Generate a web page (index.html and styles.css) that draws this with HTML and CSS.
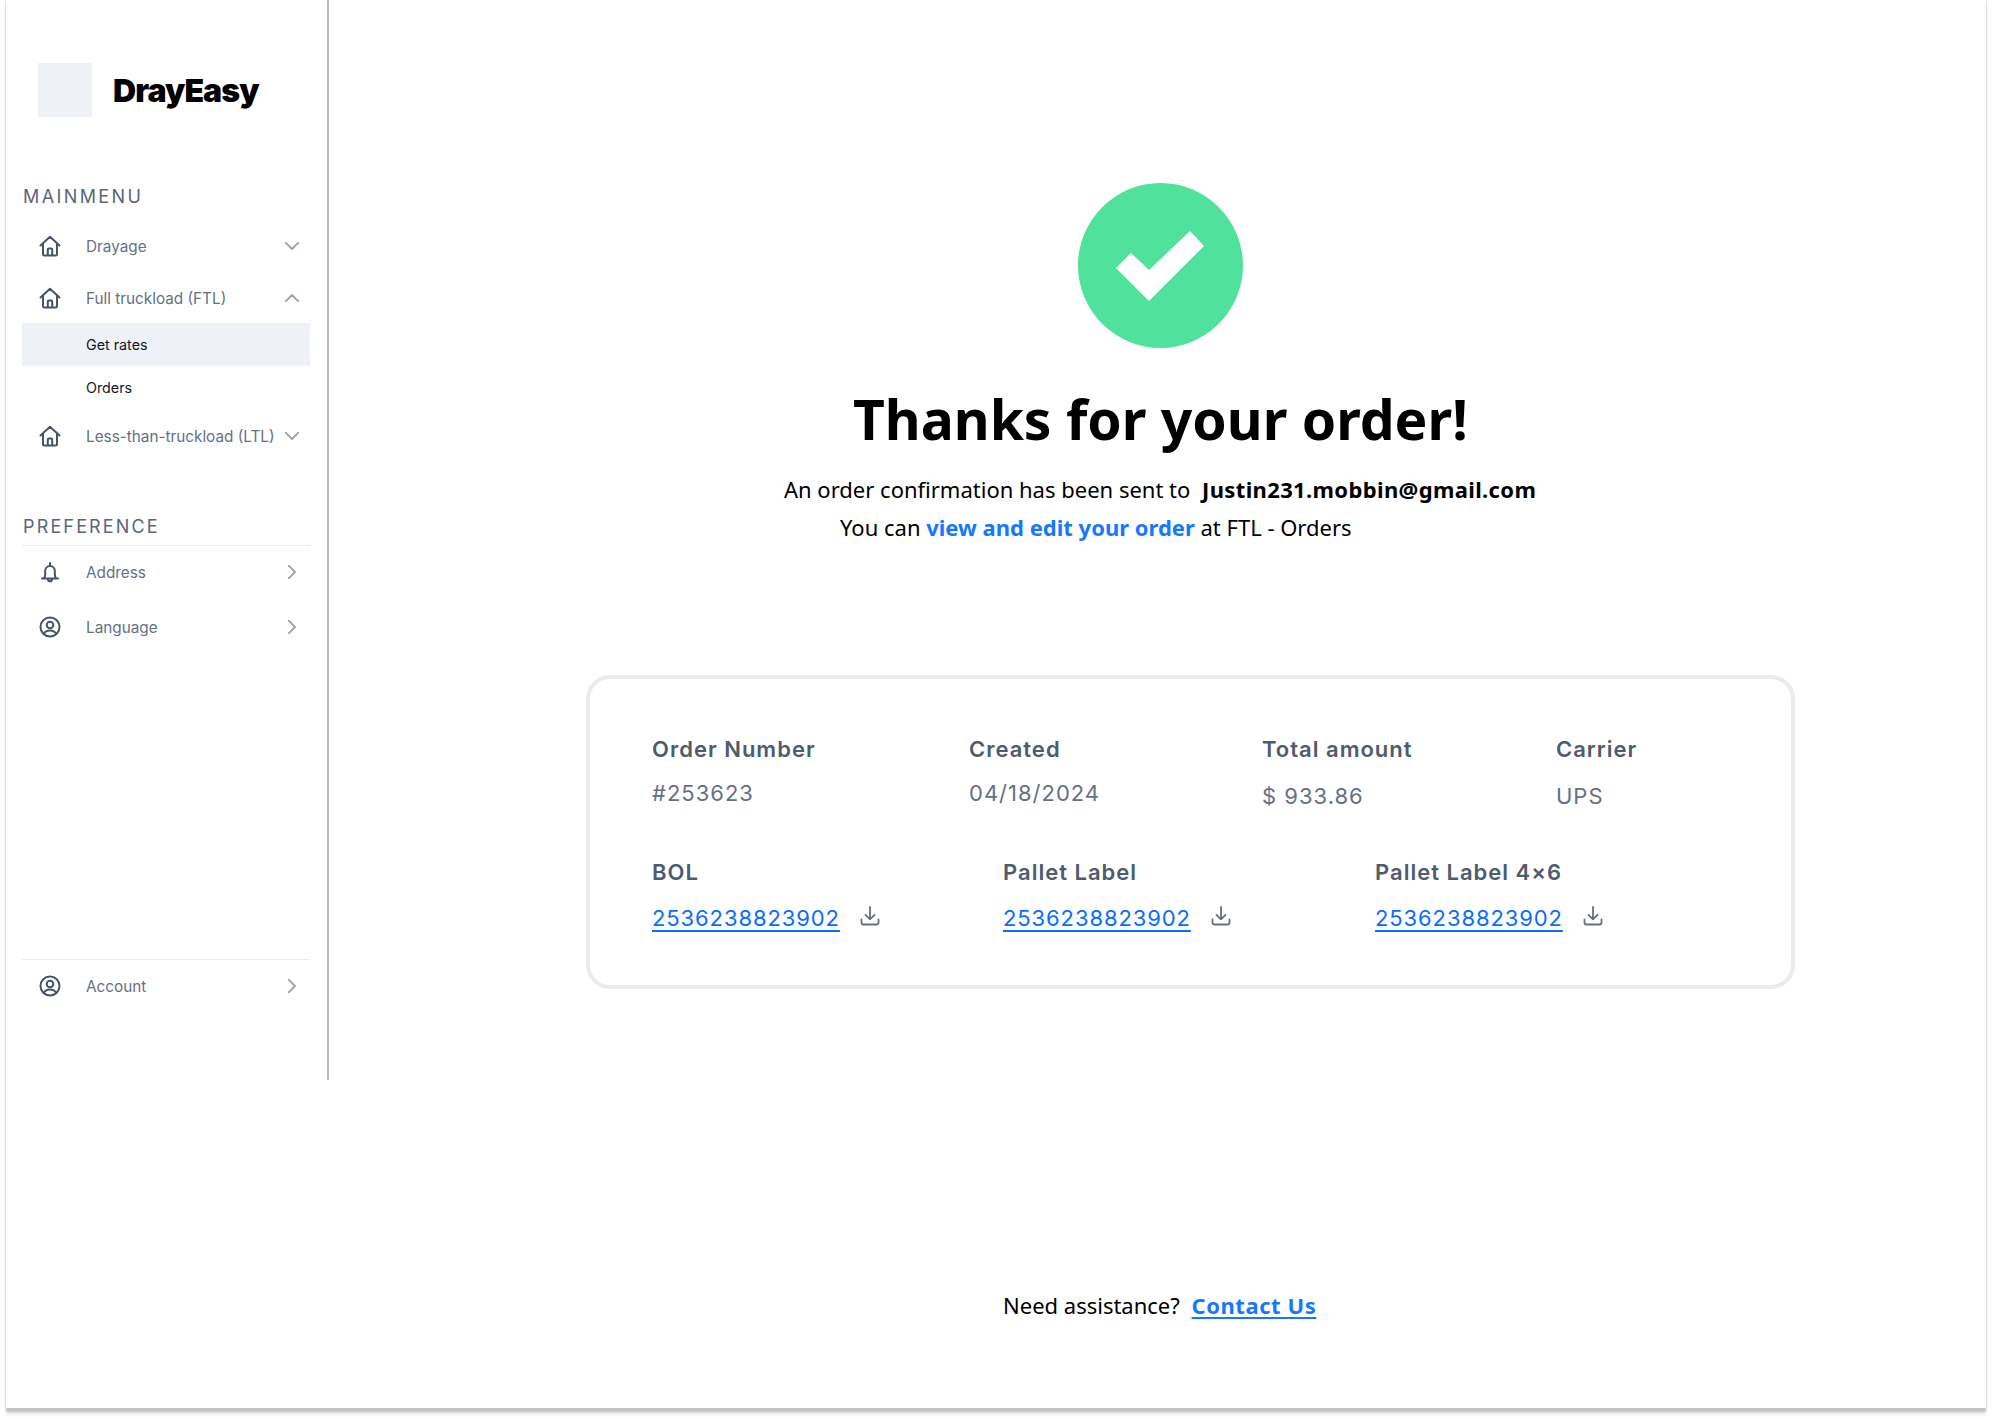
FILE: index.html
```html
<!DOCTYPE html>
<html lang="en">
<head>
<meta charset="utf-8">
<title>DrayEasy - Thanks for your order</title>
<link rel="stylesheet" href="styles.css">
</head>
<body>
<svg class="defs" width="0" height="0" aria-hidden="true">
  <symbol id="home" viewBox="0 0 24 24"><path d="M2.5 11.5 12 2.8l9.5 8.7M5 9.5V20a1.5 1.5 0 0 0 1.5 1.5h11A1.5 1.5 0 0 0 19 20V9.5M9.8 21.5v-6a1 1 0 0 1 1-1h2.4a1 1 0 0 1 1 1v6"/></symbol>
  <symbol id="bell" viewBox="0 0 24 24"><path d="M4 18.5h16M6 18.500c.9-1.300 1.200-2.800 1.200-4.500v-3.200a4.800 4.800 0 0 1 9.600 0V14c0 1.700.3 3.200 1.200 4.500M12 3v3M9.800 19c.2 1.400 1 2.300 2.200 2.300s2-.9 2.200-2.300"/></symbol>
  <symbol id="user" viewBox="0 0 24 24"><circle cx="12" cy="12" r="9.500"/><circle cx="12" cy="10" r="3.300"/><path d="M5.800 18.800c1.200-2.200 3.400-3.300 6.200-3.300s5 1.100 6.200 3.300"/></symbol>
  <symbol id="down" viewBox="0 0 14 8"><path d="M.7.700 7 7l6.300-6.300"/></symbol>
  <symbol id="up" viewBox="0 0 14 8"><path d="M.7 7.300 7 1l6.300 6.300"/></symbol>
  <symbol id="right" viewBox="0 0 8 14"><path d="M.7.700 7 7 .7 13.300"/></symbol>
  <symbol id="download" viewBox="0 0 20 20"><path d="M10 1v12M5.500 8.800 10 13.300l4.500-4.500M1.500 13.500v3a2 2 0 0 0 2 2h13a2 2 0 0 0 2-2v-3"/></symbol>
</svg>
<div class="frame">
  <aside class="sidebar">
    <div class="brand"><div class="logo"></div><span class="brand-name">DrayEasy</span></div>
    <h2 class="section-title main-title">MAINMENU</h2>
    <nav class="menu">
      <a class="item first"><svg class="icon"><use href="#home"/></svg><span>Drayage</span><svg class="chev"><use href="#down"/></svg></a>
      <a class="item ftl"><svg class="icon"><use href="#home"/></svg><span>Full truckload (FTL)</span><svg class="chev"><use href="#up"/></svg></a>
      <a class="sub active">Get rates</a>
      <a class="sub">Orders</a>
      <a class="item ltl"><svg class="icon"><use href="#home"/></svg><span>Less-than-truckload (LTL)</span><svg class="chev"><use href="#down"/></svg></a>
    </nav>
    <h2 class="section-title pref-title">PREFERENCE</h2>
    <nav class="menu ruled">
      <a class="item address"><svg class="icon"><use href="#bell"/></svg><span>Address</span><svg class="chev-r"><use href="#right"/></svg></a>
      <a class="item language"><svg class="icon"><use href="#user"/></svg><span>Language</span><svg class="chev-r"><use href="#right"/></svg></a>
    </nav>
    <nav class="menu ruled bottom">
      <a class="item account"><svg class="icon"><use href="#user"/></svg><span>Account</span><svg class="chev-r"><use href="#right"/></svg></a>
    </nav>
  </aside>
  <main class="content">
    <div class="check">
      <svg viewBox="0 0 165 165" width="165" height="165"><circle cx="82.500" cy="82.500" r="82.500" fill="#50E29C"/><path fill="#fff" d="M38 85 53 70 71 87 112 48 126 63 71 118Z"/></svg>
    </div>
    <h1 class="title">Thanks for your order!</h1>
    <p class="line one">An order confirmation has been sent to <b class="email">Justin231.mobbin@gmail.com</b></p>
    <p class="line two">You can <a class="edit">view and edit your order</a> at FTL - Orders</p>
    <section class="card">
      <div class="row top">
        <div class="cell"><div class="label">Order Number</div><div class="value">#253623</div></div>
        <div class="cell"><div class="label">Created</div><div class="value">04/18/2024</div></div>
        <div class="cell low"><div class="label">Total amount</div><div class="value">$ 933.86</div></div>
        <div class="cell low"><div class="label">Carrier</div><div class="value">UPS</div></div>
      </div>
      <div class="row docs">
        <div class="cell"><div class="label">BOL</div><div class="doc"><a class="num">2536238823902</a><svg class="dl"><use href="#download"/></svg></div></div>
        <div class="cell"><div class="label">Pallet Label</div><div class="doc"><a class="num">2536238823902</a><svg class="dl"><use href="#download"/></svg></div></div>
        <div class="cell"><div class="label">Pallet Label 4×6</div><div class="doc"><a class="num">2536238823902</a><svg class="dl"><use href="#download"/></svg></div></div>
      </div>
    </section>
    <p class="help">Need assistance? <a class="contact">Contact Us</a></p>
  </main>
</div>
</body>
</html>
```
FILE: styles.css
```css
* { box-sizing: border-box; }
html, body { margin: 0; padding: 0; background: #fff; }
body { width: 1992px; height: 1419px; overflow: hidden; font-family: "Inter", sans-serif; }
.defs { position: absolute; }
symbol path, symbol circle { fill: none; stroke-linecap: round; stroke-linejoin: round; }

.frame {
  display: flex;
  align-items: flex-start;
  width: 1980px;
  height: 1408px;
  margin-left: 6px;
  background: #fff;
  box-shadow: 0 4px 2px #c2c2c2, 0 7px 3px #eeeeee, -1px 0 0 #ececec, 1px 0 0 #ececec;
}

.sidebar {
  display: flex;
  flex-direction: column;
  flex: 0 0 323px;
  height: 1080px;
  padding-left: 16px;
  border-right: 2px solid #b4bbc5;
}
.brand { display: flex; align-items: center; gap: 21px; margin: 63px 0 0 16px; }
.logo { width: 54px; height: 54px; background: #eef1f5; }
.brand-name { position: relative; top: 1px; font-size: 32px; font-weight: 900; letter-spacing: -.9px; color: #000; line-height: 54px; }

.section-title { margin: 0; font-weight: 400; color: #5a6579; font-size: 18px; line-height: 20px; }
.main-title { margin: 70px 0 0 1px; letter-spacing: 2.400px; }
.pref-title { margin: 61px 0 8px 1px; letter-spacing: 2.150px; }

.menu { width: 288px; display: flex; flex-direction: column; }
.ruled { border-top: 1px solid #eaecf0; }
.bottom { margin-top: auto; margin-bottom: 74px; }
.item { display: flex; align-items: center; height: 40px; padding-left: 16px; color: #667085; font-size: 15.300px; }
.item span { margin-left: 24px; white-space: nowrap; }
.icon { width: 24px; height: 24px; flex: none; stroke: #475467; stroke-width: 2; }
.chev { width: 14px; height: 8px; flex: none; margin-left: auto; margin-right: 11px; stroke: #98a2b3; stroke-width: 1.800; }
.chev-r { width: 8px; height: 14px; flex: none; margin-left: auto; margin-right: 14px; stroke: #98a2b3; stroke-width: 1.800; }
.first { margin-top: 19px; }
.ftl { margin-top: 12px; }
.sub { display: flex; align-items: center; height: 43px; padding-left: 64px; font-size: 14.300px; color: #101828; }
.ftl + .sub { margin-top: 5px; }
.active { background: #eef1f5; }
.ltl { margin-top: 7px; }
.address { margin-top: 6px; }
.language { margin-top: 15px; }
.account { margin-top: 6px; }

.content { flex: 1 1 auto; display: flex; flex-direction: column; align-items: flex-start; padding-top: 183px; font-family: "Noto Sans", sans-serif; color: #000; }
.check { display: flex; margin-left: 749px; }
.title { margin: 31px 0 0 524px; font-size: 55.200px; line-height: 80px; font-weight: 700; white-space: nowrap; }
.line { margin: 0; font-size: 22px; line-height: 38px; white-space: nowrap; }
.one { margin: 11px 0 0 455px; }
.two { margin-left: 511px; }
.email { margin-left: 6px; font-weight: 700; letter-spacing: .35px; }
.edit { font-weight: 700; color: #1677ff; }

.card { width: 1209px; height: 314px; margin: 129px 0 0 257px; padding: 55px 62px 0; border: 4px solid #e9ebec; border-radius: 24px; font-family: "Inter", sans-serif; }
.row { display: grid; }
.top { grid-template-columns: 317px 293px 294px 1fr; }
.docs { grid-template-columns: 351px 372px 1fr; margin-top: 46px; }
.label { font-size: 22px; line-height: 30px; font-weight: 600; letter-spacing: 1px; color: #4f5b6e; white-space: nowrap; }
.value { margin-top: 14px; font-size: 22px; line-height: 30px; letter-spacing: 1px; color: #667085; }
.low .value { margin-top: 17px; }
.doc { display: flex; align-items: center; margin-top: 16px; height: 30px; }
.num { font-size: 22px; line-height: 30px; letter-spacing: .9px; color: #0b6dfb; text-decoration: underline; text-underline-offset: 4px; }
.dl { width: 20px; height: 20px; margin: -4px 0 0 20px; stroke: #667085; stroke-width: 1.800; }

.help { margin: 299px 0 0 674px; font-size: 22px; line-height: 34px; white-space: nowrap; }
.contact { margin-left: 6px; font-weight: 700; letter-spacing: .55px; color: #1677ff; text-decoration: underline; text-underline-offset: 3px; }
```
